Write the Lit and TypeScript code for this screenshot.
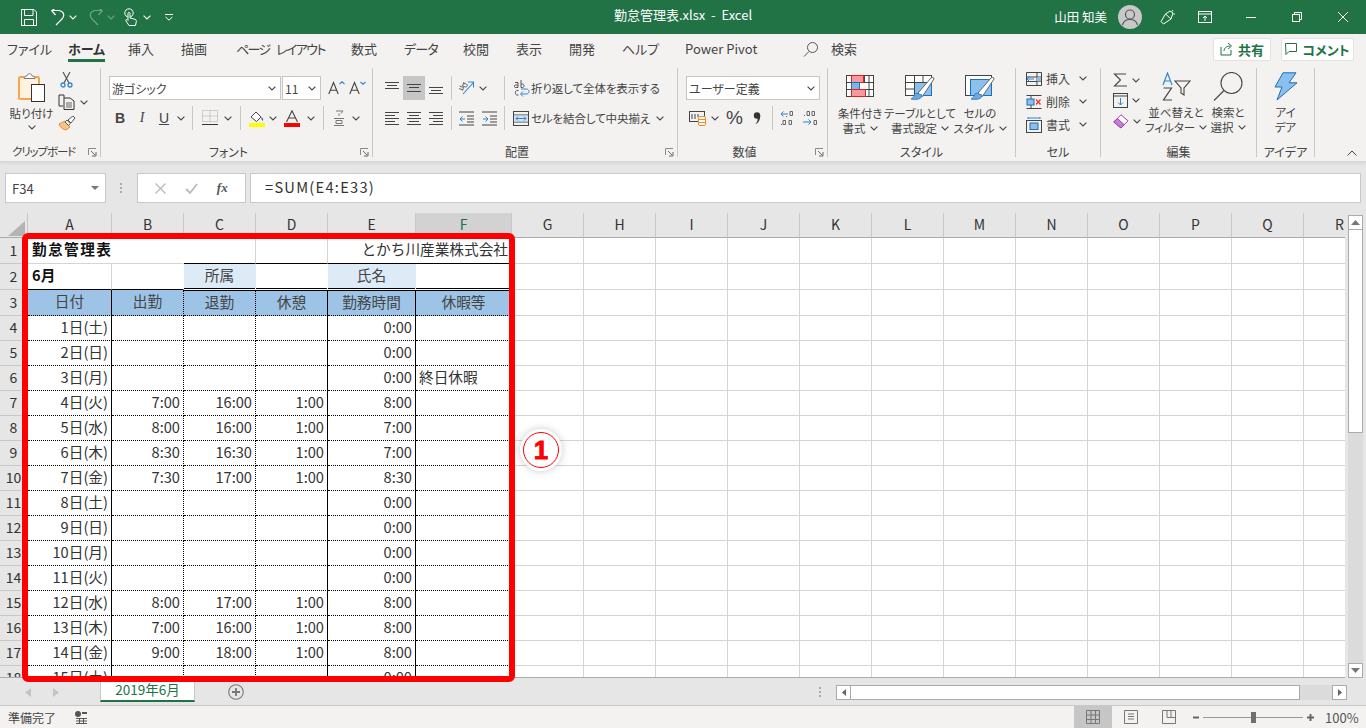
import {LitElement, html, svg, css} from 'lit';
import {customElement} from 'lit/decorators.js';

const chev = html`<svg class="chev" width="8" height="5" viewBox="0 0 8 5"><path d="M.6.6 4 4 7.4.6" fill="none" stroke="#444" stroke-width="1.1"/></svg>`;
const chevW = html`<svg width="8" height="5" viewBox="0 0 8 5"><path d="M.6.6 4 4 7.4.6" fill="none" stroke="#fff" stroke-width="1.1"/></svg>`;
const launcher = html`<svg class="launch" width="9" height="9" viewBox="0 0 9 9"><path d="M.5 7V.5H8" fill="none" stroke="#8a8a8a"/><path d="M3 3l4 4M4 8h4V4" fill="none" stroke="#666"/></svg>`;
const lines = (ys: number[][]) => html`<svg width="16" height="16" viewBox="0 0 16 16">${ys.map(([y, a, b]) => svg`<rect x=${a} y=${y} width=${b - a} height="1" fill="#444"></rect>`)}</svg>`;

const cols = ['A', 'B', 'C', 'D', 'E', 'F', 'G', 'H', 'I', 'J', 'K', 'L', 'M', 'N', 'O', 'P', 'Q', 'R'];
const days = ['土', '日', '月', '火', '水', '木', '金'];
// B, C, D, E values for rows 4 to 18
const times: string[][] = [
  ['', '', '', '0:00'], ['', '', '', '0:00'], ['', '', '', '0:00'],
  ['7:00', '16:00', '1:00', '8:00'], ['8:00', '16:00', '1:00', '7:00'],
  ['8:30', '16:30', '1:00', '7:00'], ['7:30', '17:00', '1:00', '8:30'],
  ['', '', '', '0:00'], ['', '', '', '0:00'], ['', '', '', '0:00'], ['', '', '', '0:00'],
  ['8:00', '17:00', '1:00', '8:00'], ['7:00', '16:00', '1:00', '8:00'],
  ['9:00', '18:00', '1:00', '8:00'], ['', '', '', '0:00']
];
const tabs = ['ファイル', 'ホーム', '挿入', '描画', 'ページ レイアウト', '数式', 'データ', '校閲', '表示', '開発', 'ヘルプ', 'Power Pivot'];

@customElement('app-root')
export class AppRoot extends LitElement {
  static styles = css`
    :host {
      display: block;
      position: relative;
      width: 1366px;
      height: 728px;
      overflow: hidden;
      background: #e6e6e6;
      font-family: "Noto Sans CJK JP", "Noto Sans", sans-serif;
      font-size: 12px;
      color: #444;
    }
    svg { display: block; flex: none; }
    .palt { font-feature-settings: "palt"; }

    /* title bar */
    .title {
      height: 34px;
      background: #217346;
      color: #fff;
      display: grid;
      grid-template-columns: 1fr auto 1fr;
      align-items: center;
      font-size: 13px;
    }
    .doc { padding-bottom: 5px; }
    .qat { display: flex; align-items: center; padding-left: 21px; }
    .q-undo { margin-left: 14px; }
    .q-c1 { margin-left: 4px; }
    .q-redo { margin-left: 12px; }
    .q-touch { margin-left: 9px; }
    .q-c2 { margin-left: 6px; }
    .q-more { margin-left: 14px; }
    .dim { opacity: .35; }
    .win { display: flex; align-items: center; justify-content: flex-end; padding-right: 18px; }
    .user { margin-right: 11px; font-size: 12.5px; white-space: nowrap; padding-bottom: 2px; }
    .avatar { width: 24px; height: 24px; border-radius: 50%; background: #c8c8c8; margin-right: 18px; }
    .w-disp { margin-left: 22px; }
    .w-min { margin-left: 34px; }
    .w-max { margin-left: 36px; }
    .w-x { margin-left: 36px; }

    /* ribbon tabs */
    .tabrow {
      height: 34px;
      box-sizing: border-box;
      padding: 0 0 4px 7px;
      background: #f3f2f1;
      display: flex;
      align-items: center;
      font-size: 13px;
      color: #444;
    }
    .tabs {
      display: grid;
      grid-template-columns: 61px 60px 53px 55px 115px 53px 59px 53px 53px 53px 63px 118px 28px auto;
      align-items: center;
    }
    .tabs span { white-space: nowrap; height: 26px; line-height: 25px; justify-self: start; }
    .tabs .on { font-weight: 700; border-bottom: 3px solid #217346; height: 23px; color: #333; }
    .tabs .narrow { letter-spacing: -1.6px; word-spacing: 5px; }
    .tabs .tight { letter-spacing: -.8px; }
    .actions { margin-left: auto; display: flex; gap: 10px; padding-right: 12px; }
    .act {
      height: 21px;
      display: flex;
      align-items: center;
      justify-content: center;
      gap: 5px;
      background: #fff;
      border: 1px solid #e4e2e0;
      border-radius: 2px;
      color: #217346;
      font-weight: 700;
      font-size: 13px;
    }
    .share { width: 56px; }
    .comment { width: 71px; }

    /* ribbon */
    .ribbon {
      height: 93px;
      background: #f3f2f1;
      display: flex;
      border-bottom: 1px solid #d8d8d8;
      box-shadow: 0 2px 2px #d9d9d9;
      position: relative;
      box-sizing: content-box;
    }
    .group {
      height: 89px;
      box-sizing: border-box;
      border-right: 1px solid #c8c8c8;
      display: grid;
      grid-template-rows: 74px 13px;
      flex: none;
    }
    .foot {
      display: grid;
      grid-template-columns: 1fr auto 1fr;
      align-items: center;
      height: 18px;
      color: #444;
      font-size: 12px;
      white-space: nowrap;
    }
    .foot .launch { grid-column: 3; justify-self: end; margin-right: -13px; margin-top: 2px; }
    .foot span { grid-column: 2; }
    .has { padding-right: 16px; }
    .foot-clip { grid-template-columns: 12px auto 1fr; padding-right: 0; font-size: 11.5px; letter-spacing: -1.1px; }
    .foot-clip .launch { margin-right: 3px; }
    .g-clip { width: 101px; }
    .g-font { width: 272px; }
    .g-align { width: 305px; }
    .g-num { width: 150px; }
    .g-style { width: 188px; }
    .g-cell { width: 85px; }
    .g-edit { width: 156px; }
    .g-idea { width: 58px; }
    .rows { padding: 8px 0 0 8px; display: flex; flex-direction: column; }
    .r { display: grid; align-items: center; justify-items: center; height: 24px; }
    .r2 { margin-top: 6px; }
    .sep { width: 1px; height: 24px; background: #c8c8c8; }
    .select {
      height: 24px;
      box-sizing: border-box;
      background: #fff;
      border: 1px solid #c6c6c6;
      display: flex;
      align-items: center;
      justify-content: space-between;
      padding: 0 4px 0 2px;
      font-size: 12px;
      color: #444;
      justify-self: stretch;
    }
    .sel-on { background: #c6c6c6; width: 22px; height: 24px; display: flex; align-items: center; justify-content: center; }
    .clip { display: grid; grid-template-columns: 45px 46px; padding-left: 9px; }
    .paste { display: flex; flex-direction: column; align-items: center; padding-top: 4px; line-height: 14px; font-size: 11.5px; }
    .paste .lbl { margin-top: 4px; white-space: nowrap; }
    .paste .chev { margin-top: 5px; }
    .clip-tools { display: flex; flex-direction: column; padding: 4px 0 0 4px; gap: 6px; }
    .sciss { margin-left: 2px; }
    .clip-copy { display: flex; align-items: center; gap: 5px; }
    .f1 { grid-template-columns: 172px 1px 39px 7px 18px 3px 18px; }
    .f2 { grid-template-columns: 22px 22px 22px 12px 11px 24px 11px 14px 19px 14px 24px 13px 12px 20px 14px; }
    .btn-b { font: 700 14px "Liberation Sans", sans-serif; color: #444; }
    .btn-i { font: italic 14px "Liberation Serif", serif; color: #444; }
    .btn-u { font: 14px "Liberation Sans", sans-serif; color: #444; text-decoration: underline; }
    .a1 { grid-template-columns: 22px 22px 22px 8px 23px 9px 17px 1px 9px 16px 1px auto; }
    .a2 { grid-template-columns: 22px 22px 22px 8px 23px 22px 4px 1px 7px 17px 2px 116px 9px 8px; }
    .wraptext { justify-self: start; white-space: nowrap; font-size: 11.5px; letter-spacing: -.1px; }
    .n1 { grid-template-columns: 134px; }
    .n2 { grid-template-columns: 24px 10px 29px 16px 14px 18px 4px 18px; }
    .pct { font: 19px "Liberation Sans", sans-serif; color: #444; }
    .big3 { display: grid; grid-template-columns: 60px 60px 60px; padding-left: 2px; }
    .big {
      display: flex;
      flex-direction: column;
      align-items: center;
      padding-top: 7px;
      line-height: 15px;
      white-space: nowrap;
      font-size: 11.5px;
    }
    .big .t { margin-top: 9px; }
    .big .t.m5 { margin-top: 5px; }
    .big .t.m4 { margin-top: 4px; }
    .big .b { display: flex; align-items: center; gap: 4px; }
    .top4 { padding-top: 4px; }
    .cellrow { display: grid; grid-template-columns: 20px 33px 10px; height: 23px; align-items: center; justify-items: start; }
    .cellbox { display: flex; flex-direction: column; padding-left: 10px; margin-top: -1px; }
    .edit { display: grid; grid-template-columns: 35px 56px 48px; padding-left: 12px; }
    .edit-left { display: flex; flex-direction: column; gap: 6px; padding-top: 5px; }
    .e-row { display: flex; align-items: center; gap: 4px; }
    .collapse { align-self: flex-end; margin: 0 9px 5px auto; }

    /* formula bar */
    .fbar {
      height: 51px;
      box-sizing: border-box;
      display: grid;
      grid-template-columns: 101px 31px 109px 1fr;
      padding: 11px 5px 10px 5px;
      background: #e6e6e6;
    }
    .box {
      background: #fff;
      border: 1px solid #c8c8c8;
      box-sizing: border-box;
      display: flex;
      align-items: center;
      height: 30px;
    }
    .name { justify-content: space-between; padding: 0 6px; font-size: 13px; }
    .grip { display: flex; align-items: center; justify-content: center; }
    .fx { justify-content: space-around; padding: 0 8px; }
    .fxi { font: italic 700 13px "Liberation Serif", serif; color: #555; }
    .formula { margin-left: 4px; padding: 0 0 4px 14px; font-size: 14.67px; letter-spacing: 1.25px; color: #333; }

    /* sheet */
    .sheetwrap { height: 465px; display: flex; }
    .sheet { width: 1345px; overflow: hidden; flex: none; border-bottom: 1px solid #ababab; box-sizing: border-box; }
    .grid {
      display: grid;
      grid-template-columns: 28px 84px 72px 72px 72px 88px 96px repeat(12, 72px);
      grid-template-rows: 25px 26px 26px 26px repeat(15, 25px);
      width: 1376px;
      background: #fff;
      font-size: 14.67px;
      line-height: 1;
      color: #333;
    }
    .ch, .rh {
      background: #e6e6e6;
      display: flex;
      align-items: center;
      justify-content: center;
      box-sizing: border-box;
      color: #333;
      font-size: 14px;
      padding-bottom: 2px;
    }
    .ch { border-right: 1px solid #c8c8c8; border-bottom: 1px solid #ababab; }
    .ch.sel { background: #d2d2d2; color: #217346; }
    .rh { border-right: 1px solid #ababab; border-bottom: 1px solid #c8c8c8; }
    .corner { background: #e6e6e6; border-right: 1px solid #c8c8c8; border-bottom: 1px solid #ababab; box-sizing: border-box; display: flex; justify-content: flex-end; align-items: flex-end; padding: 0 2px 1px 0; }
    .c {
      box-sizing: border-box;
      border-right: 1px solid #d4d4d4;
      border-bottom: 1px solid #d4d4d4;
      display: flex;
      align-items: center;
      white-space: nowrap;
      overflow: hidden;
      padding: 0 3px 2px;
    }
    .right { justify-content: flex-end; }
    .center { justify-content: center; color: #444; }
    .bold { font-weight: 700; color: #111; }
    .wide { letter-spacing: 1.4px; }
    .ml { padding-left: 4px; }
    .span2 { grid-column: span 2; }
    .fill-l { background: #ddebf7; }
    .fill-h { background: #9dc3e6; }
    .bb { border-bottom: 1px solid #000; }
    .bd { border-bottom: 1px solid #fff; box-shadow: inset 0 -1px #000; }
    .bt { border-top: 1px solid #000; }
    .bdot { border-bottom: 1px dotted #000; }
    .rs { border-right: 1px solid #000; }
    .rdot { border-right: 1px dotted #000; }
    .rn { border-right-color: transparent; }

    .vscroll { flex: 1; background: #e6e6e6; display: flex; flex-direction: column; align-items: center; padding-top: 2px; }
    .vbtn { width: 15px; height: 15px; background: #fff; border: 1px solid #ababab; box-sizing: border-box; display: flex; align-items: center; justify-content: center; flex: none; }
    .vthumb { width: 15px; height: 203px; background: #fff; border: 1px solid #ababab; border-top: none; box-sizing: border-box; flex: none; }
    .vtrack { flex: 1; width: 15px; background: #dbdbdb; }

    /* sheet tabs */
    .tabbar {
      height: 28px;
      background: #e6e6e6;
      display: flex;
      align-items: flex-start;
      border-bottom: 1px solid #c8c8c8;
      box-sizing: border-box;
    }
    .arrows { width: 100px; display: flex; gap: 22px; padding: 10px 0 0 25px; box-sizing: border-box; }
    .stab {
      width: 95px;
      height: 24px;
      box-sizing: border-box;
      background: #fff;
      border: 1px solid #c8c8c8;
      border-top: none;
      border-bottom: 2px solid #217346;
      color: #217346;
      font-size: 13.5px;
      display: flex;
      align-items: center;
      justify-content: center;
    }
    .plus { margin: 6px 0 0 33px; }
    .hgrip { margin: 9px 0 0 575px; }
    .hscroll { margin: 7px 0 0 14px; width: 511px; height: 15px; display: flex; }
    .hbtn { width: 15px; height: 15px; flex: none; background: #fff; border: 1px solid #ababab; box-sizing: border-box; display: flex; align-items: center; justify-content: center; }
    .hthumb { width: 449px; background: #fff; border: 1px solid #ababab; border-left: none; box-sizing: border-box; flex: none; }
    .htrack { width: 32px; background: #dbdbdb; flex: none; }

    /* status bar */
    .status {
      height: 22px;
      background: #f3f2f1;
      display: flex;
      align-items: center;
      padding-left: 8px;
      font-size: 12px;
      color: #444;
    }
    .macro { margin-left: 19px; }
    .views { margin-left: auto; display: flex; align-items: center; }
    .view { width: 38px; height: 22px; display: flex; align-items: center; justify-content: center; }
    .view.on { background: #c6c6c6; }
    .slider { display: flex; align-items: center; margin-left: 5px; }
    .zline { width: 100px; height: 1px; background: #999; position: relative; margin: 0 4px 0 3px; }
    .zthumb { position: absolute; left: 48px; top: -5px; width: 5px; height: 11px; background: #6f6f6f; }
    .pct-z { width: 33px; margin: 0 8px 0 11px; font-size: 13px; color: #555; white-space: nowrap; }

    /* callout */
    .mark {
      position: absolute;
      left: 22px;
      top: 233px;
      width: 493px;
      height: 449px;
      border: 6px solid #f00;
      border-radius: 6px;
      box-sizing: border-box;
    }
    .num {
      position: absolute;
      left: 523px;
      top: 432px;
      width: 36px;
      height: 36px;
      box-sizing: border-box;
      border-radius: 50%;
      background: #fff;
      box-shadow: 0 0 0 3px #fff, 0 0 7px 4px rgba(120, 120, 120, .3);
      border: 1.5px solid #f00;
      color: #f00;
      font: 700 26px "Liberation Sans", sans-serif;
      display: flex;
      align-items: center;
      justify-content: center;
      -webkit-text-stroke: .8px #f00;
    }
  `;

  private _titleBar() {
    return html`
      <div class="title">
        <div class="qat">
          <svg width="16" height="17" viewBox="0 0 16 17" fill="none" stroke="#fff"><path d="M.5.5h12.5l2.500 2.500v13.500H.5z"/><path d="M3.500.5v6h8.500v-6M3.500 16.500v-6h9v6"/></svg>
          <svg class="q-undo" width="14" height="17" viewBox="0 0 14 17" fill="none" stroke="#fff" stroke-width="1.200"><path d="M5 16l6-6c3-3 2-8-3-8.500H1"/><path d="M4.500 6 .8 1.700 4.500-1"/></svg>
          <span class="q-c1">${chevW}</span>
          <svg class="q-redo dim" width="14" height="17" viewBox="0 0 14 17" fill="none" stroke="#fff" stroke-width="1.200"><path d="M9 16l-6-6C0 7 1 2 6 1.500h7"/><path d="M9.500 6l3.700-4.300L9.500-1"/></svg>
          <span class="q-c1 dim">${chevW}</span>
          <svg class="q-touch" width="13" height="18" viewBox="0 0 13 18" fill="none" stroke="#fff"><circle cx="5" cy="5" r="4.200"/><path d="M4 5.500c0-1.500 2-1.500 2 0V10l4 1c2 .5 2.500 1 2.300 2.500l-.8 4H5L2 13c-.8-1.200.5-2 1.500-1.200L4 12.300z" fill="#217346"/></svg>
          <span class="q-c2">${chevW}</span>
          <svg class="q-more" width="8" height="8" viewBox="0 0 8 8" fill="none" stroke="#fff"><path d="M0 1.500h8"/><path d="M.6 4 4 7.200 7.400 4"/></svg>
        </div>
        <div class="doc">勤怠管理表.xlsx&nbsp; - &nbsp;Excel</div>
        <div class="win">
          <span class="user">山田 知美</span>
          <div class="avatar">
            <svg width="24" height="24" viewBox="0 0 24 24" fill="none" stroke="#555" stroke-width="1.200"><circle cx="12" cy="9.500" r="4.500"/><path d="M4.500 20c1-4 4-5.500 7.500-5.500s6.500 1.500 7.500 5.500"/></svg>
          </div>
          <svg width="16" height="16" viewBox="0 0 16 16" fill="none" stroke="#fff"><path d="M1 12.500 5.500 5 11 10l-7.500 5z"/><path d="M5.500 5 10 2l3 2-2 6M13 1l-1 1.500M15 5h-1.500"/></svg>
          <svg class="w-disp" width="14" height="12" viewBox="0 0 14 12" fill="none" stroke="#fff"><rect x=".5" y=".5" width="13" height="11"/><path d="M.5 3h13M7 10V5M5 7l2-2 2 2"/></svg>
          <svg class="w-min" width="10" height="1" viewBox="0 0 10 1"><rect width="10" height="1" fill="#fff"/></svg>
          <svg class="w-max" width="10" height="10" viewBox="0 0 10 10" fill="none" stroke="#fff"><rect x=".5" y="2.500" width="7" height="7"/><path d="M2.500 2.500v-2h7v7h-2"/></svg>
          <svg class="w-x" width="10" height="10" viewBox="0 0 10 10" stroke="#fff"><path d="M0 0l10 10M10 0 0 10"/></svg>
        </div>
      </div>
    `;
  }

  private _tabRow() {
    const cls = (i: number) => (i === 1 ? 'on' : i === 4 ? 'narrow' : i === 6 ? 'tight' : '');
    return html`
      <div class="tabrow palt">
        <div class="tabs">
          ${tabs.map((t, i) => html`<span class=${cls(i)}>${t}</span>`)}
          <svg width="15" height="15" viewBox="0 0 15 15" fill="none" stroke="#555"><circle cx="9.500" cy="5.500" r="5"/><path d="M6 9.500 1 14.500"/></svg>
          <span>検索</span>
        </div>
        <div class="actions">
          <div class="act share">
            <svg width="13" height="14" viewBox="0 0 13 14" fill="none" stroke="#217346"><path d="M1 5v8h10V8M4 9c0-3 3-5 6-5M8 1l3.500 3L8 7"/></svg>共有
          </div>
          <div class="act comment">
            <svg width="12" height="12" viewBox="0 0 12 12" fill="none" stroke="#217346"><path d="M.5.5h11v8H4l-3 3z"/></svg>コメント
          </div>
        </div>
      </div>
    `;
  }

  private _clipboard() {
    return html`
      <div class="group g-clip">
        <div class="clip">
          <div class="paste">
            <svg width="28" height="30" viewBox="0 0 28 30"><rect x="1" y="5" width="20" height="22" rx="1.500" fill="#fff3df" stroke="#f5a54e" stroke-width="2"/><path d="M6 6.500c0-2 2-2.500 3-2.500 0-3 5-3 5 0 1 0 3 .5 3 2.500z" fill="#fff" stroke="#777"/><rect x="13.500" y="12.500" width="13" height="17" fill="#fff" stroke="#333"/></svg>
            <span class="lbl palt">貼り付け</span>
            ${chev}
          </div>
          <div class="clip-tools">
            <svg class="sciss" width="13" height="16" viewBox="0 0 13 16" fill="none"><path d="M3 0l6 11M10 0 4 11" stroke="#555" stroke-width="1.200"/><circle cx="3" cy="13" r="2" stroke="#2e86d1" stroke-width="1.300"/><circle cx="10" cy="13" r="2" stroke="#2e86d1" stroke-width="1.300"/></svg>
            <div class="clip-copy">
              <svg width="17" height="16" viewBox="0 0 17 16" fill="none" stroke="#333"><path d="M6 1H1v11h4"/><path d="M6 1v3M6 4h6l4 3v8.500H6z" fill="#f3f2f1"/><path d="M8 9h6M8 11h6M8 13h6" stroke="#666"/></svg>
              ${chev}
            </div>
            <svg width="18" height="15" viewBox="0 0 18 15"><path d="M1 8l6-3 5 6-4 3c-3-.5-6-3-7-6z" fill="#f8c28a" stroke="#ed8b2d"/><path d="M7 6l2-2 3 3.500-1.500 2z" fill="#fff" stroke="#555"/><path d="M10 4l5-4 2 2-4 5z" fill="#fff" stroke="#555"/></svg>
          </div>
        </div>
        <div class="foot foot-clip palt"><span>クリップボード</span>${launcher}</div>
      </div>
    `;
  }

  private _font() {
    return html`
      <div class="group g-font">
        <div class="rows">
          <div class="r f1">
            <div class="select palt"><span>游ゴシック</span>${chev}</div>
            <span></span>
            <div class="select"><span>11</span>${chev}</div>
            <span></span>
            <svg width="18" height="14" viewBox="0 0 18 14" fill="none"><path d="M.8 13 5.500 1.500 10.200 13M2.500 9.200h6" stroke="#444" stroke-width="1.100"/><path d="M11.500 3 14 .8 16.500 3" stroke="#2e86d1" stroke-width="1.100"/></svg>
            <span></span>
            <svg width="18" height="14" viewBox="0 0 18 14" fill="none"><path d="M.8 13 5.500 1.500 10.200 13M2.500 9.200h6" stroke="#444" stroke-width="1.100"/><path d="M11.500 1 14 3.200 16.500 1" stroke="#2e86d1" stroke-width="1.100"/></svg>
          </div>
          <div class="r r2 f2">
            <span class="btn-b">B</span><span class="btn-i">I</span><span class="btn-u">U</span>${chev}
            <i class="sep"></i>
            <svg width="16" height="16" viewBox="0 0 16 16" fill="none"><path d="M.5.500h15v11H.5zM8 .5v11M.5 6h15" stroke="#aaa" stroke-dasharray="1 1"/><rect y="14" width="16" height="1" fill="#333"/></svg>
            ${chev}
            <i class="sep"></i>
            <svg width="16" height="17" viewBox="0 0 16 17"><path d="M2 7l5-5 5 5-4.500 4.500z" fill="#fff" stroke="#444"/><path d="M12.500 7c1.500 1 2 2.500 1.500 4l-1.500-1.500z" fill="#1f6fb5"/><rect y="13" width="16" height="4" fill="#ff0"/></svg>
            ${chev}
            <svg width="16" height="17" viewBox="0 0 16 17" fill="none"><path d="M2.500 12 8 .8 13.500 12M4.500 8h7" stroke="#444" stroke-width="1.100"/><rect y="13" width="16" height="4" fill="#f00"/></svg>
            ${chev}
            <i class="sep"></i>
            <svg width="12" height="16" viewBox="0 0 12 16" fill="none" stroke="#777"><path d="M3 1h7L8 3.500M6 3.500V6"/><path d="M1 8.500h10M3 10.500h6v3H3zM1 15.500h10"/></svg>
            ${chev}
          </div>
        </div>
        <div class="foot has palt"><span>フォント</span>${launcher}</div>
      </div>
    `;
  }

  private _alignment() {
    return html`
      <div class="group g-align">
        <div class="rows">
          <div class="r a1">
            ${lines([[2, 1, 15], [5, 3, 13], [8, 1, 15]])}
            <div class="sel-on">${lines([[4, 1, 15], [7, 3, 13], [11, 1, 15]])}</div>
            ${lines([[7, 1, 15], [10, 3, 13], [13, 1, 15]])}
            <i class="sep"></i>
            <svg width="17" height="16" viewBox="0 0 17 16" fill="none"><path d="M1 8.500 5 10M1.500 6l4 1.500-1 3M6 2l-1.500 4 3 1c1.500.5 2.500-2.500 1-3L5.500 3.500" stroke="#666"/><path d="M5 14 15 3M10 2h5.500v5.500" stroke="#2e86d1" stroke-width="1.100"/></svg>
            ${chev}
            <span></span>
            <i class="sep"></i>
            <span></span>
            <svg width="16" height="18" viewBox="0 0 16 18" fill="none"><path d="M1 3.500h3v5H1.500C0 8.500 0 6 1.500 6H4M7 1v7.500h1.500c2 0 2-3.500 0-3.500H7M4.500 11.500H3C.8 11.500.8 16 3 16h1.500" stroke="#555"/><path d="M7 15h5c4 0 4-5 0-5H7M9 12.500 6.500 15 9 17.500" stroke="#2e86d1"/></svg>
            <span></span>
            <span class="wraptext palt">折り返して全体を表示する</span>
          </div>
          <div class="r r2 a2">
            ${lines([[2, 1, 15], [5, 1, 11], [8, 1, 15], [11, 1, 11], [14, 1, 15]])}
            ${lines([[2, 1, 15], [5, 3, 13], [8, 1, 15], [11, 3, 13], [14, 1, 15]])}
            ${lines([[2, 1, 15], [5, 5, 15], [8, 1, 15], [11, 5, 15], [14, 1, 15]])}
            <i class="sep"></i>
            <svg width="15" height="15" viewBox="0 0 15 15" fill="none"><path d="M0 1h15M8 5h7M8 8h7M8 11h7M0 14h15" stroke="#444"/><path d="M6 8H1M3.500 5.500 1 8l2.500 2.500" stroke="#2e86d1"/></svg>
            <svg width="15" height="15" viewBox="0 0 15 15" fill="none"><path d="M0 1h15M8 5h7M8 8h7M8 11h7M0 14h15" stroke="#444"/><path d="M1 8h5M3.500 5.500 6 8l-2.500 2.500" stroke="#2e86d1"/></svg>
            <span></span>
            <i class="sep"></i>
            <span></span>
            <svg width="16" height="15" viewBox="0 0 16 15" fill="none"><rect x=".5" y=".5" width="15" height="14" stroke="#444"/><path d="M.5 4h15M.5 11h15" stroke="#444"/><rect x="1" y="4.500" width="14" height="6" fill="#cfe4f6"/><path d="M3 7.500h10M5 5.500l-2 2 2 2M11 5.500l2 2-2 2" stroke="#2e86d1"/></svg>
            <span></span>
            <span class="wraptext palt">セルを結合して中央揃え</span>
            <span></span>
            ${chev}
          </div>
        </div>
        <div class="foot has palt"><span>配置</span>${launcher}</div>
      </div>
    `;
  }

  private _number() {
    return html`
      <div class="group g-num">
        <div class="rows">
          <div class="r n1"><div class="select palt"><span>ユーザー定義</span>${chev}</div></div>
          <div class="r r2 n2">
            <svg width="18" height="16" viewBox="0 0 18 16" fill="none"><rect x=".5" y="1.500" width="15" height="10" stroke="#444"/><path d="M3 4v5M6 4v5M9 4v3" stroke="#444"/><rect x="9.500" y="6.500" width="7" height="9" rx="1.500" fill="#fff" stroke="#ed8b2d"/><path d="M10 9.500h6M10 12.500h6" stroke="#ed8b2d"/></svg>
            ${chev}
            <span class="pct">%</span>
            <svg width="8" height="13" viewBox="0 0 8 13"><circle cx="4" cy="3.500" r="3.200" fill="#333"/><path d="M7 3c.8 4-1.500 8-5 9.500 2-2 3-4 2.500-6z" fill="#333"/></svg>
            <i class="sep"></i>
            <svg width="17" height="16" viewBox="0 0 17 16" fill="none" stroke="#666"><path d="M10 1.500h2.500v4H10zM6 6.500h1M3 10.500h2.500v4H3zM9 10.500h2.500v4H9zM1 14.500h1"/><path d="M8 4H1M3.500 1.500 1 4l2.500 2.500" stroke="#2e86d1"/></svg>
            <span></span>
            <svg width="17" height="16" viewBox="0 0 17 16" fill="none" stroke="#666"><path d="M5 1.500h2.500v4H5zM10 1.500h2.500v4H10zM2 5.500h1M12 10.500h2.500v4H12z"/><path d="M1 12h8M6.500 9.500 9 12l-2.500 2.500" stroke="#2e86d1"/></svg>
          </div>
        </div>
        <div class="foot has palt"><span>数値</span>${launcher}</div>
      </div>
    `;
  }

  private _tableIcon() {
    return html`<svg width="28" height="22" viewBox="0 0 28 22">
      <rect x=".5" y=".5" width="27" height="21" fill="#fff" stroke="#444"/>
      <rect x="5.500" y=".5" width="12" height="7" fill="#f8999e" stroke="#d22"/>
      <rect x="5.500" y="7.500" width="8" height="7" fill="#7ab6ea" stroke="#1f6fb5"/>
      <rect x="5.500" y="14.500" width="14" height="7" fill="#f8999e" stroke="#d22"/>
      <path d="M.5 7.500h5M.5 14.500h5M18 7.500h9.500M20 14.500h7.500M18.500 0v7M23 0v22" fill="none" stroke="#444"/>
    </svg>`;
  }

  private _brushIcon(plain: boolean) {
    return html`<svg width="30" height="26" viewBox="0 0 30 26">
      <rect x=".5" y=".5" width="26" height="20" fill="#fff" stroke="#444"></rect>
      ${plain ? svg`
        <rect x="5.500" y="4.500" width="21" height="16" fill="#8bbfee" stroke="#1f6fb5"></rect>
      ` : svg`
        <rect x="9.500" y="7.500" width="17" height="13" fill="#8bbfee" stroke="#1f6fb5"></rect>
        <path d="M.5 7.500h26M.5 14h9M9.500 0v20M18 0v7" fill="none" stroke="#444"></path>
      `}
      <path d="M13 18 26 3c1-1 3-1 3 1L17 22z" fill="#fff" stroke="#666"></path>
      <path d="M11 18c-2 1-1 4-5 6 6 1 11 0 11-4z" fill="#6fa8dc" stroke="#2e86d1"></path>
    </svg>`;
  }

  private _styles() {
    return html`
      <div class="group g-style">
        <div class="big3 palt">
          <div class="big">
            ${this._tableIcon()}
            <span class="t">条件付き</span><span class="b">書式 ${chev}</span>
          </div>
          <div class="big">
            ${this._brushIcon(false)}
            <span class="t m5">テーブルとして</span><span class="b">書式設定 ${chev}</span>
          </div>
          <div class="big">
            ${this._brushIcon(true)}
            <span class="t m5">セルの</span><span class="b">スタイル ${chev}</span>
          </div>
        </div>
        <div class="foot palt"><span>スタイル</span></div>
      </div>
    `;
  }

  private _cells() {
    return html`
      <div class="group g-cell">
        <div class="cellbox palt">
          <div class="cellrow">
            <svg width="16" height="14" viewBox="0 0 16 14" fill="none"><path d="M.5.500h15v13H.5zM.5 5h15M.5 9.500h15M11 0v14" stroke="#444"/><path d="M8 7H1M3.500 4.500 1 7l2.500 2.500" stroke="#2e86d1"/><rect x="11" y="5" width="4" height="4.500" fill="#8bbfee"/></svg>
            <span>挿入</span>${chev}
          </div>
          <div class="cellrow">
            <svg width="16" height="14" viewBox="0 0 16 14" fill="none"><path d="M.5.500h15M.5 13.500h15M5 0v14" stroke="#444"/><rect x="1" y="4" width="7" height="6" fill="#8bbfee" stroke="#1f6fb5"/><path d="M10 4.500l4.500 5M14.500 4.500l-4.500 5" stroke="#e33" stroke-width="1.300"/></svg>
            <span>削除</span>${chev}
          </div>
          <div class="cellrow">
            <svg width="16" height="16" viewBox="0 0 16 16" fill="none"><path d="M2 1h12M2 0v2M14 0v2" stroke="#2e86d1"/><rect x=".5" y="3.500" width="15" height="12" stroke="#444"/><rect x="4" y="6" width="8" height="6.500" fill="#8bbfee" stroke="#1f6fb5"/></svg>
            <span>書式</span>${chev}
          </div>
        </div>
        <div class="foot palt"><span>セル</span></div>
      </div>
    `;
  }

  private _editing() {
    return html`
      <div class="group g-edit">
        <div class="edit palt">
          <div class="edit-left">
            <div class="e-row">
              <svg width="15" height="14" viewBox="0 0 15 14" fill="none" stroke="#444" stroke-width="1.100"><path d="M13 1H1.500L7.500 7l-6 6H14"/></svg>
              <span>${chev}</span>
            </div>
            <div class="e-row">
              <svg width="15" height="15" viewBox="0 0 15 15" fill="none"><rect x=".5" y=".5" width="14" height="14" stroke="#444"/><path d="M.5 3h14" stroke="#444"/><path d="M7.500 5v7M5 9.500l2.500 2.500L10 9.500" stroke="#2e86d1"/></svg>
              ${chev}
            </div>
            <div class="e-row">
              <svg width="16" height="15" viewBox="0 0 16 15"><path d="M.8 8 8 .8l7 6L8 14z" fill="#fff" stroke="#a13fb0"/><path d="M.8 8 4.500 4.500 11 10.500 8 14z" fill="#c77fd4" stroke="#a13fb0"/></svg>
              ${chev}
            </div>
          </div>
          <div class="big top4">
            <svg width="29" height="29" viewBox="0 0 29 29" fill="none"><path d="M1 13 5.500 1 10 13M2.500 9h6" stroke="#2e86d1" stroke-width="1.200"/><path d="M1.500 16h8l-8 12h8.500" stroke="#444" stroke-width="1.200"/><path d="M13 9h15l-6 7v7l-3-2v-5z" stroke="#444" stroke-width="1.100"/></svg>
            <span class="t m4">並べ替えと</span><span class="b">フィルター ${chev}</span>
          </div>
          <div class="big top4">
            <svg width="30" height="29" viewBox="0 0 30 29" fill="none" stroke="#444"><circle cx="18.500" cy="11" r="10.500" stroke-width="1.100"/><path d="M11 18.500 1 28.500" stroke-width="1.100"/></svg>
            <span class="t m4">検索と</span><span class="b">選択 ${chev}</span>
          </div>
        </div>
        <div class="foot palt"><span>編集</span></div>
      </div>
    `;
  }

  private _ideas() {
    return html`
      <div class="group g-idea">
        <div class="big top4 palt">
          <svg width="24" height="29" viewBox="0 0 24 29"><path d="M9 .8h13l-7 10h8L3 28l5-13H1z" fill="#8bbfee" stroke="#1f6fb5"/></svg>
          <span class="t m4">アイ</span><span>デア</span>
        </div>
        <div class="foot palt"><span>アイデア</span></div>
      </div>
    `;
  }

  private _formulaBar() {
    return html`
      <div class="fbar">
        <div class="box name"><span>F34</span>
          <svg width="8" height="4" viewBox="0 0 8 4"><path d="M0 0h8L4 4z" fill="#777"/></svg>
        </div>
        <div class="grip">
          <svg width="3" height="11" viewBox="0 0 3 11" fill="#aaa"><rect y="0" width="2" height="2"/><rect y="4" width="2" height="2"/><rect y="8" width="2" height="2"/></svg>
        </div>
        <div class="box fx">
          <svg width="11" height="11" viewBox="0 0 11 11" stroke="#bbb" stroke-width="1.400"><path d="M.5.500l10 10M10.500.5l-10 10"/></svg>
          <svg width="13" height="11" viewBox="0 0 13 11" fill="none" stroke="#bbb" stroke-width="1.800"><path d="M1 6l4 4 7-9"/></svg>
          <span class="fxi">fx</span>
        </div>
        <div class="box formula">=SUM(E4:E33)</div>
      </div>
    `;
  }

  private _tableCells(row: number) {
    if (row === 1) {
      return html`
        <div class="c span2 bold wide ml rn">勤怠管理表</div>
        <div class="c bb"></div>
        <div class="c bb"></div>
        <div class="c span2 bb right">とかち川産業株式会社</div>
      `;
    }
    if (row === 2) {
      return html`
        <div class="c bold ml bb">6月</div>
        <div class="c bb rn"></div>
        <div class="c bd center fill-l rn">所属</div>
        <div class="c bd rn"></div>
        <div class="c bd center fill-l rn">氏名</div>
        <div class="c bd"></div>
      `;
    }
    if (row === 3) {
      return html`
        <div class="c center fill-h bdot rs">日付</div>
        <div class="c center fill-h bdot rdot">出勤</div>
        <div class="c center fill-h bdot rdot bt">退勤</div>
        <div class="c center fill-h bdot rs bt">休憩</div>
        <div class="c center fill-h bdot rs bt">勤務時間</div>
        <div class="c center fill-h bdot bt">休暇等</div>
      `;
    }
    const d = row - 3;
    const [b, c, dd, e] = times[row - 4];
    return html`
      <div class="c right bdot rs">${d}日(${days[(d - 1) % 7]})</div>
      <div class="c right bdot rdot">${b}</div>
      <div class="c right bdot rdot">${c}</div>
      <div class="c right bdot rs">${dd}</div>
      <div class="c right bdot rs">${e}</div>
      <div class="c bdot">${row === 6 ? '終日休暇' : ''}</div>
    `;
  }

  private _grid() {
    const rows = Array.from({length: 18}, (_, i) => i + 1);
    return html`
      <div class="grid">
        <div class="corner"><svg width="17" height="15" viewBox="0 0 17 15"><path d="M17 0v15H0z" fill="#b4b4b4"/></svg></div>
        ${cols.map((c) => html`<div class="ch ${c === 'F' ? 'sel' : ''}">${c}</div>`)}
        ${rows.map((r) => html`
          <div class="rh">${r}</div>
          ${this._tableCells(r)}
          ${cols.slice(6).map(() => html`<div class="c"></div>`)}
        `)}
      </div>
    `;
  }

  private _tabBar() {
    return html`
      <div class="tabbar">
        <div class="arrows">
          <svg width="6" height="9" viewBox="0 0 6 9"><path d="M6 0v9L0 4.500z" fill="#c4c4c4"/></svg>
          <svg width="6" height="9" viewBox="0 0 6 9"><path d="M0 0v9l6-4.500z" fill="#c4c4c4"/></svg>
        </div>
        <div class="stab">2019年6月</div>
        <svg class="plus" width="16" height="16" viewBox="0 0 16 16" fill="none" stroke="#777"><circle cx="8" cy="8" r="7.300" stroke-width="1.100"/><path d="M8 4v8M4 8h8" stroke-width="1.800"/></svg>
        <svg class="hgrip" width="3" height="11" viewBox="0 0 3 11" fill="#aaa"><rect width="2" height="2"/><rect y="4" width="2" height="2"/><rect y="8" width="2" height="2"/></svg>
        <div class="hscroll">
          <div class="hbtn"><svg width="4" height="7" viewBox="0 0 4 7"><path d="M4 0v7L0 3.500z" fill="#666"/></svg></div>
          <div class="hthumb"></div>
          <div class="htrack"></div>
          <div class="hbtn"><svg width="4" height="7" viewBox="0 0 4 7"><path d="M0 0v7l4-3.500z" fill="#666"/></svg></div>
        </div>
      </div>
    `;
  }

  private _status() {
    return html`
      <div class="status">
        <span class="palt">準備完了</span>
        <svg class="macro" width="13" height="13" viewBox="0 0 13 13" fill="#555"><circle cx="3" cy="3" r="3"/><path d="M7 1h5v2H7zM1 7h11v1H1zM1 9.500h11v1H1zM1 12h11v1H1zM4 7h1v6H4zM8 7h1v6H8z"/></svg>
        <div class="views">
          <div class="view on">
            <svg width="14" height="14" viewBox="0 0 14 14" fill="none" stroke="#777"><path d="M.5.500h13v13H.5zM.5 5h13M.5 9.500h13M5 0v14M9.500 0v14"/></svg>
          </div>
          <div class="view">
            <svg width="14" height="14" viewBox="0 0 14 14" fill="none" stroke="#777"><path d="M.5.500h13v13H.5zM4 4h6M4 6.500h6M4 9h6"/></svg>
          </div>
          <div class="view">
            <svg width="14" height="14" viewBox="0 0 14 14" fill="none" stroke="#777"><path d="M.5.500h13v13H.5zM5 .5v7h8.500M9 0v7"/></svg>
          </div>
          <div class="slider">
            <svg width="7" height="9" viewBox="0 0 7 9"><rect y="3.500" width="6" height="2" fill="#666"/></svg>
            <div class="zline"><div class="zthumb"></div></div>
            <svg width="7" height="9" viewBox="0 0 7 9"><path d="M0 3.500h7v2H0zM2.500 1h2v7h-2z" fill="#666"/></svg>
          </div>
          <div class="pct-z">100%</div>
        </div>
      </div>
    `;
  }

  render() {
    return html`
      ${this._titleBar()}
      ${this._tabRow()}
      <div class="ribbon">
        ${this._clipboard()}
        ${this._font()}
        ${this._alignment()}
        ${this._number()}
        ${this._styles()}
        ${this._cells()}
        ${this._editing()}
        ${this._ideas()}
        <svg class="collapse" width="10" height="6" viewBox="0 0 10 6" fill="none" stroke="#444"><path d="M.5 5.500 5 1l4.500 4.500"/></svg>
      </div>
      ${this._formulaBar()}
      <div class="sheetwrap">
        <div class="sheet">${this._grid()}</div>
        <div class="vscroll">
          <div class="vbtn"><svg width="9" height="5" viewBox="0 0 9 5"><path d="M0 5h9L4.500 0z" fill="#777"/></svg></div>
          <div class="vthumb"></div>
          <div class="vtrack"></div>
          <div class="vbtn"><svg width="9" height="5" viewBox="0 0 9 5"><path d="M0 0h9L4.500 5z" fill="#777"/></svg></div>
        </div>
      </div>
      ${this._tabBar()}
      ${this._status()}
      <div class="mark"></div>
      <div class="num">1</div>
    `;
  }
}
